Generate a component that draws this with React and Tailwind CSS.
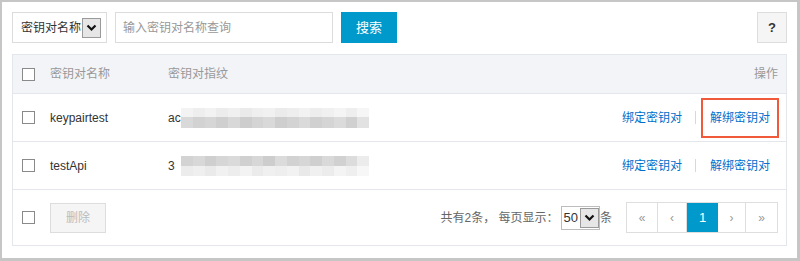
import React from 'react';

const FONT = { fontFamily: "'Liberation Sans', 'Noto Sans CJK SC', sans-serif" };

// pixelated blur shades for the hidden fingerprints
const BLUR_A_TOP = ['#f3f3f3','#eeeeee','#f2f2f2','#ececec','#f0f0f0','#eaeaea','#efefef','#f1f1f1','#ebebeb','#eeeeee','#f2f2f2','#ededed','#f0f0f0','#f4f4f4','#eeeeee','#f6f6f6'];
const BLUR_A_BOT = ['#d9d9d9','#d2d2d2','#d6d6d6','#cfcfcf','#d8d8d8','#cdcdcd','#d4d4d4','#d9d9d9','#cecece','#d3d3d3','#dadada','#d0d0d0','#d5d5d5','#dbdbdb','#d0d0d0','#e2e2e2'];
const BLUR_B_TOP = ['#d3d3d3','#d8d8d8','#cfcfcf','#d6d6d6','#dadada','#d0d0d0','#d7d7d7','#cdcdcd','#dbdbdb','#d2d2d2','#d6d6d6','#cfcfcf','#d9d9d9','#d1d1d1','#dcdcdc','#ececec'];
const BLUR_B_BOT = ['#ececec','#efefef','#eaeaea','#f1f1f1','#ededed','#f3f3f3','#ebebeb','#f0f0f0','#eeeeee','#f2f2f2','#e9e9e9','#f0f0f0','#ececec','#f4f4f4','#efefef','#f7f7f7'];

function Blur({ top, bottom, darkFirst }) {
  return (
    <div className="flex flex-col w-[188px]">
      <div className={`flex ${darkFirst ? 'h-[10px]' : 'h-[9px]'}`}>
        {top.map((c, i) => <div key={i} className="flex-1 h-full" style={{ background: c }} />)}
      </div>
      <div className={`flex ${darkFirst ? 'h-[10px]' : 'h-[11px]'}`}>
        {bottom.map((c, i) => <div key={i} className="flex-1 h-full" style={{ background: c }} />)}
      </div>
    </div>
  );
}

function Check() {
  return <div className="w-[13px] h-[13px] border border-[#8a8a8a] bg-white shrink-0" />;
}

function Arrow() {
  return (
    <div className="w-[19px] h-[20px] border border-[#9a9a9a] bg-[#e6e6e6] flex items-center justify-center">
      <svg width="11" height="8" viewBox="0 0 11 8">
        <path d="M1.5 1.5 L5.5 5.5 L9.5 1.5" fill="none" stroke="#111" strokeWidth="2.2" />
      </svg>
    </div>
  );
}

function Actions({ boxed }) {
  return (
    <div className="flex items-center ml-auto mr-[16px]">
      <span className="text-[#0070cc]">绑定密钥对</span>
      <span className="w-px h-[13px] bg-[#d8d8d8] ml-[13px] mr-[14px]" />
      <span className={boxed ? 'border-2 border-[#f05a3a] px-[7px] py-[9px] -mx-[9px] -my-[11px] text-[#0070cc]' : 'text-[#0070cc]'}>解绑密钥对</span>
    </div>
  );
}

export default function App() {
  return (
    <div className="w-[800px] h-[261px] bg-white border-l-2 border-t-2 border-r-[3px] border-b-[3px] border-[#c6c6c6] pl-[10px] pt-[10px] pr-[10px] text-[12px] text-[#333]" style={FONT}>
      <div className="flex items-center h-[31px]">
        <div className="w-[95px] h-[31px] border border-[#dcdcdc] flex items-center pl-[8px] gap-[1px]">
          <span>密钥对名称</span>
          <Arrow />
        </div>
        <div className="w-[218px] h-[31px] border border-[#dcdcdc] ml-[8px] flex items-center pl-[7px] text-[#999]">
          输入密钥对名称查询
        </div>
        <div className="w-[56px] h-[31px] bg-[#0099cc] text-white ml-[8px] flex items-center justify-center text-[13px]">搜索</div>
        <div className="ml-auto w-[30px] h-[31px] bg-[#f5f5f5] border border-[#dddddd] flex items-center justify-center font-bold text-[#333] text-[13px]">?</div>
      </div>

      <div className="mt-[11px] w-[775px] border border-[#e3e6eb]">
        <div className="h-[39px] bg-[#f3f4f8] border-b border-[#e3e6eb] flex items-center pl-[9px] text-[#999]">
          <Check />
          <span className="ml-[15px] w-[118px]">密钥对名称</span>
          <span>密钥对指纹</span>
          <span className="ml-auto mr-[8px]">操作</span>
        </div>
        <div className="h-[48px] border-b border-[#e3e6eb] flex items-center pl-[9px]">
          <Check />
          <span className="ml-[15px] w-[118px]">keypairtest</span>
          <span className="w-[13px] whitespace-nowrap">ac</span>
          <Blur top={BLUR_A_TOP} bottom={BLUR_A_BOT} />
          <Actions boxed />
        </div>
        <div className="h-[48px] border-b border-[#e3e6eb] flex items-center pl-[9px]">
          <Check />
          <span className="ml-[15px] w-[118px]">testApi</span>
          <span className="w-[13px]">3</span>
          <Blur top={BLUR_B_TOP} bottom={BLUR_B_BOT} darkFirst />
          <Actions />
        </div>
        <div className="h-[55px] flex items-center pl-[9px]">
          <Check />
          <div className="ml-[15px] w-[56px] h-[30px] bg-[#f5f5f5] border border-[#dddddd] text-[#bbb] flex items-center justify-center">删除</div>
          <div className="ml-auto flex items-center text-[#666]">
            <span>共有2条， 每页显示：</span>
            <div className="flex items-center h-[24px] border border-[#bdbdbd] ml-[2px]">
              <span className="text-[#333] text-[13px] px-[2px]">50</span>
              <Arrow />
            </div>
            <span>条</span>
          </div>
          <div className="flex ml-[14px] mr-[8px] h-[31px] border border-[#dedede] text-[#999]">
            <div className="w-[31px] flex items-center justify-center border-r border-[#dedede]">«</div>
            <div className="w-[29px] flex items-center justify-center border-r border-[#dedede]">‹</div>
            <div className="w-[31px] flex items-center justify-center bg-[#0099cc] text-white text-[13px]">1</div>
            <div className="w-[28px] flex items-center justify-center border-r border-[#dedede]">›</div>
            <div className="w-[31px] flex items-center justify-center">»</div>
          </div>
        </div>
      </div>
    </div>
  );
}
